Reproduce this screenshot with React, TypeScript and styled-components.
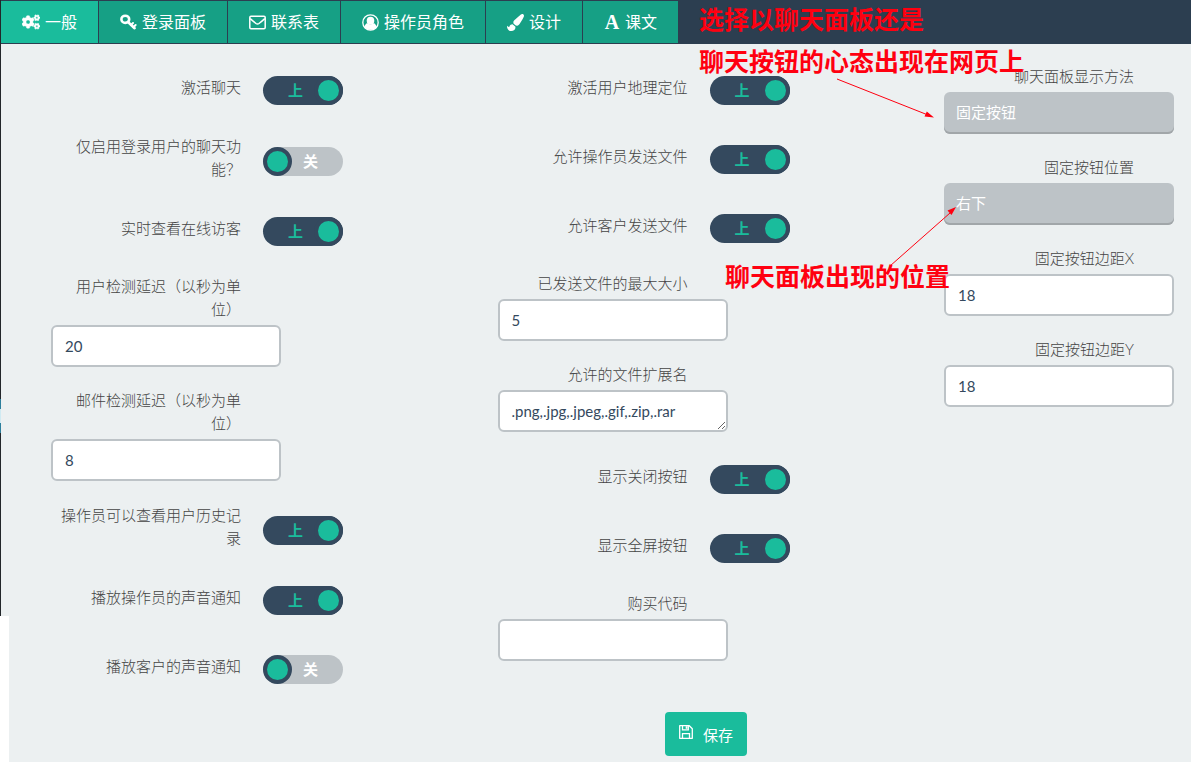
import React, { useId, useState } from "react";
import styled, { createGlobalStyle } from "styled-components";
import { FaCogs, FaPaintBrush } from "react-icons/fa";

const color = {
  page: "#ecf0f1",
  navy: "#2c3e50",
  slate: "#34495e",
  teal: "#1abc9c",
  tealDark: "#16a085",
  silver: "#bdc3c7",
  silverDark: "#a1a6a9",
  text: "#444444",
  red: "#ff0010",
};

const GlobalStyle = createGlobalStyle`
  *, *::before, *::after { box-sizing: border-box; }
  body {
    margin: 0;
    background: ${color.page};
    color: ${color.text};
    font-family: Lato, "Noto Sans CJK SC", sans-serif;
    font-size: 15px;
  }
  button, input, select, textarea { font: inherit; }
`;

const Page = styled.div`
  position: relative;
  min-height: 100vh;
  padding-left: 1px;
  overflow: hidden;
`;

const EdgeLine = styled.div`
  position: absolute;
  left: 0;
  top: 0;
  width: 1px;
  height: 616px;
  background: linear-gradient(
    #22262a 399px,
    #2d7f9c 399px 409px,
    #cfeaf2 409px 423px,
    #2d7f9c 423px 433px,
    #22262a 433px
  );
`;

const EdgeBlank = styled.div`
  position: absolute;
  left: 0;
  top: 616px;
  bottom: 0;
  width: 9px;
  background: #fff;
`;

const TabBar = styled.nav`
  display: flex;
  height: 44px;
  padding: 1px 0;
  background: ${color.navy};
`;

const Tab = styled.button<{ $active: boolean }>`
  display: flex;
  align-items: center;
  gap: 5px;
  padding: 0 21px;
  border: 0;
  border-right: 1px solid ${color.navy};
  background: ${(p) => (p.$active ? color.teal : color.tealDark)};
  color: #fff;
  font-size: 16px;
  line-height: 24px;
  white-space: nowrap;
  cursor: pointer;
`;

const LetterIcon = styled.span`
  width: 16px;
  font-family: "Liberation Serif", serif;
  font-weight: 700;
  font-size: 20px;
  text-align: center;
`;

const Columns = styled.div`
  display: flex;
  justify-content: space-between;
  align-items: flex-start;
  padding: 21px 17px 0 50px;
`;

const Column = styled.div`
  display: flex;
  flex-direction: column;
`;

const Label = styled.label`
  display: block;
  width: 190px;
  font-weight: 300;
  line-height: 23px;
  text-align: right;
  text-spacing-trim: space-all;
`;

const Field = styled.div`
  display: flex;
  flex-direction: column;
  gap: 4px;
  width: 230px;
  margin-bottom: 22px;
`;

const TextInput = styled.input`
  width: 100%;
  height: 42px;
  padding: 0 12px;
  border: 2px solid ${color.silver};
  border-radius: 6px;
  background: #fff;
  color: ${color.slate};
`;

const TextArea = styled.textarea`
  display: block;
  width: 100%;
  height: 42px;
  padding: 8px 12px;
  border: 2px solid ${color.silver};
  border-radius: 6px;
  background: #fff;
  color: ${color.slate};
  line-height: 22px;
  overflow: hidden;
`;

const Select = styled.select`
  appearance: none;
  width: 100%;
  height: 42px;
  padding: 0 12px 2px;
  border: 0;
  border-radius: 6px;
  background: ${color.silver};
  box-shadow: inset 0 -2px 0 ${color.silverDark};
  color: #fff;
`;

const SwitchRow = styled.div`
  display: flex;
  align-items: center;
  gap: 22px;
  min-height: 45px;
  margin-bottom: 24px;

  &:last-child {
    margin-bottom: 0;
  }

  ${Label} {
    padding: 1px 0;
  }
`;

const Track = styled.span<{ $on: boolean }>`
  position: relative;
  display: flex;
  flex-direction: ${(p) => (p.$on ? "row" : "row-reverse")};
  align-items: center;
  justify-content: space-between;
  width: 80px;
  height: 29px;
  margin-top: 6px;
  border-radius: 15px;
  background: ${(p) => (p.$on ? color.slate : color.silver)};
  color: ${(p) => (p.$on ? color.teal : "#fff")};
`;

const TrackText = styled.span<{ $on: boolean }>`
  margin: ${(p) => (p.$on ? "0 0 0 25px" : "0 25px 0 0")};
  font-weight: 700;
  line-height: 29px;
`;

const Knob = styled.span`
  flex: none;
  width: 29px;
  height: 29px;
  border: 4px solid ${color.slate};
  border-radius: 50%;
  background: ${color.teal};
`;

const SwitchInput = styled.input`
  position: absolute;
  inset: 0;
  width: 100%;
  height: 100%;
  margin: 0;
  opacity: 0;
  cursor: pointer;
`;

const Actions = styled.div`
  display: flex;
  justify-content: center;
  padding: 23px 0 6px 220px;
`;

const SaveButton = styled.button`
  display: flex;
  align-items: center;
  gap: 10px;
  height: 44px;
  padding: 0 14px;
  border: 0;
  border-radius: 4px;
  background: ${color.teal};
  color: #fff;
  cursor: pointer;

  svg {
    margin-bottom: 4px;
  }
`;

const Note = styled.p<{ $left: number; $top: number }>`
  position: absolute;
  left: ${(p) => p.$left}px;
  top: ${(p) => p.$top}px;
  margin: 0;
  color: ${color.red};
  font-size: 25px;
  font-weight: 700;
  line-height: 42px;
  white-space: nowrap;
  pointer-events: none;
`;

const Arrows = styled.svg`
  position: absolute;
  left: 830px;
  top: 70px;
  pointer-events: none;
`;

const KeyIcon = () => (
  <svg width="17" height="17" viewBox="0 0 17 17" aria-hidden="true">
    <ellipse cx="5.300" cy="5.300" rx="3.900" ry="3.600" fill="none" stroke="#fff" strokeWidth="2.600" />
    <path d="M8 8l6.600 6.200" stroke="#fff" strokeWidth="2.600" strokeLinecap="round" />
    <path d="M11 11l2-2M13.400 13.200l2.200-2.200" stroke="#fff" strokeWidth="2" strokeLinecap="round" />
  </svg>
);

const EnvelopeIcon = () => (
  <svg width="17" height="17" viewBox="0 0 17 17" fill="none" stroke="#fff" strokeWidth="1.500" aria-hidden="true">
    <rect x="0.8" y="2.300" width="15.400" height="12.400" rx="1.200" />
    <path d="M1.200 4.600c2 2 4.200 3.400 5.800 4.900 1 .8 2 .8 3 0 1.600-1.500 3.800-2.900 5.800-4.900" />
  </svg>
);

const UserIcon = () => (
  <svg width="17" height="17" viewBox="0 0 17 17" aria-hidden="true">
    <circle cx="8.500" cy="8.500" r="7.700" fill="none" stroke="#fff" strokeWidth="1.300" />
    <ellipse cx="8.500" cy="6.800" rx="3.800" ry="4" fill="#fff" />
    <path d="M2.500 13.200c.4-2.400 1.300-3.700 2.900-3.900 1.800 1.500 4.400 1.500 6.200 0 1.600.2 2.500 1.500 2.900 3.900-3.200 3.500-8.800 3.500-12 0z" fill="#fff" />
  </svg>
);

const FloppyIcon = () => (
  <svg width="14" height="14" viewBox="0 0 14 14" fill="none" stroke="#fff" strokeWidth="1.300" aria-hidden="true">
    <path d="M.7.7h9.600l3 3v9.600H.7z" strokeLinejoin="round" />
    <path d="M3.500.7v4.200h5.800V.7M3.500 13.300V8.700h7v4.600" />
    <path d="M7.600 1.200v2.600" strokeWidth="1.800" />
  </svg>
);

const tabs = [
  { name: "一般", icon: <FaCogs size={18} stroke="#fff" strokeWidth={16} /> },
  { name: "登录面板", icon: <KeyIcon /> },
  { name: "联系表", icon: <EnvelopeIcon /> },
  { name: "操作员角色", icon: <UserIcon /> },
  { name: "设计", icon: <FaPaintBrush size={17} /> },
  { name: "课文", icon: <LetterIcon aria-hidden="true">A</LetterIcon> },
];

function Switch({ label, initial = true }: { label: string; initial?: boolean }) {
  const id = useId();
  const [on, setOn] = useState(initial);
  return (
    <SwitchRow>
      <Label htmlFor={id}>{label}</Label>
      <Track $on={on}>
        <TrackText $on={on}>{on ? "上" : "关"}</TrackText>
        <Knob />
        <SwitchInput id={id} type="checkbox" checked={on} onChange={(e) => setOn(e.target.checked)} />
      </Track>
    </SwitchRow>
  );
}

function TextField({ label, value = "", multiline = false }: { label: string; value?: string; multiline?: boolean }) {
  const id = useId();
  return (
    <Field>
      <Label htmlFor={id}>{label}</Label>
      {multiline ? (
        <TextArea id={id} defaultValue={value} spellCheck={false} />
      ) : (
        <TextInput id={id} type="text" defaultValue={value} />
      )}
    </Field>
  );
}

function SelectField({ label, value }: { label: string; value: string }) {
  const id = useId();
  return (
    <Field>
      <Label htmlFor={id}>{label}</Label>
      <Select id={id} defaultValue={value}>
        <option>{value}</option>
      </Select>
    </Field>
  );
}

export default function App() {
  const [active, setActive] = useState("一般");
  return (
    <>
      <GlobalStyle />
      <Page>
        <TabBar>
          {tabs.map((t) => (
            <Tab key={t.name} type="button" $active={t.name === active} onClick={() => setActive(t.name)}>
              {t.icon}
              {t.name}
            </Tab>
          ))}
        </TabBar>
        <form onSubmit={(e) => e.preventDefault()}>
          <Columns>
            <Column>
              <Switch label="激活聊天" />
              <Switch label="仅启用登录用户的聊天功能？" initial={false} />
              <Switch label="实时查看在线访客" />
              <TextField label="用户检测延迟（以秒为单位）" value="20" />
              <TextField label="邮件检测延迟（以秒为单位）" value="8" />
              <Switch label="操作员可以查看用户历史记录" />
              <Switch label="播放操作员的声音通知" />
              <Switch label="播放客户的声音通知" initial={false} />
            </Column>
            <Column>
              <Switch label="激活用户地理定位" />
              <Switch label="允许操作员发送文件" />
              <Switch label="允许客户发送文件" />
              <TextField label="已发送文件的最大大小" value="5" />
              <TextField label="允许的文件扩展名" value=".png,.jpg,.jpeg,.gif,.zip,.rar" multiline />
              <Switch label="显示关闭按钮" />
              <Switch label="显示全屏按钮" />
              <TextField label="购买代码" />
            </Column>
            <Column>
              <SelectField label="聊天面板显示方法" value="固定按钮" />
              <SelectField label="固定按钮位置" value="右下" />
              <TextField label="固定按钮边距X" value="18" />
              <TextField label="固定按钮边距Y" value="18" />
            </Column>
          </Columns>
          <Actions>
            <SaveButton type="submit">
              <FloppyIcon />
              保存
            </SaveButton>
          </Actions>
        </form>
        <EdgeLine />
        <EdgeBlank />
        <Note $left={699} $top={-2}>
          选择以聊天面板还是
          <br />
          聊天按钮的心态出现在网页上
        </Note>
        <Note $left={725} $top={255}>
          聊天面板出现的位置
        </Note>
        <Arrows width="140" height="200" viewBox="0 0 140 200" aria-hidden="true">
          <g stroke={color.red} fill={color.red}>
            <path d="M7 9L98 45M60 196L120 143" strokeWidth="1" />
            <path d="M104 47.500L94.500 46.500L96.800 41.500ZM126 137L121.500 145L117.500 140.500Z" stroke="none" />
          </g>
        </Arrows>
      </Page>
    </>
  );
}
